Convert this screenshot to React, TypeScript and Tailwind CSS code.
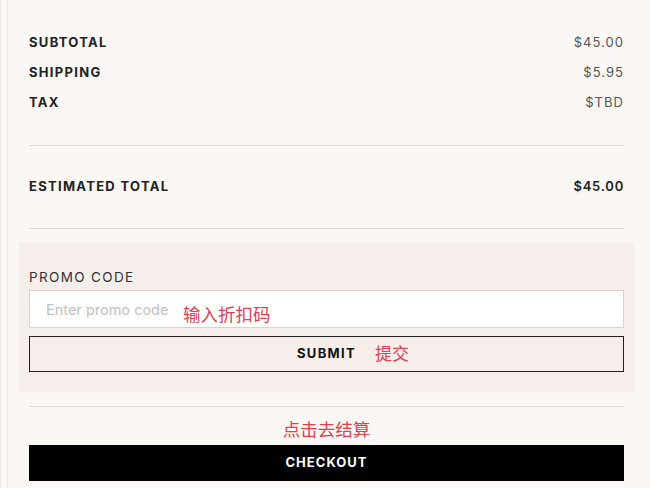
import React from 'react';

const rows = [
    { label: 'SUBTOTAL', value: '$45.00' },
    { label: 'SHIPPING', value: '$5.95' },
    { label: 'TAX', value: '$TBD' },
];

const font = { fontFamily: 'Inter, "Noto Sans CJK SC", sans-serif' };

export default function App() {
    return (
        <div className="w-[650px] h-[488px] overflow-hidden bg-[#faf7f4] flex" style={font}>
            {/* left edge strip */}
            <div className="w-[8px] shrink-0 border-l border-r border-[#ece7e3]"></div>

            <div className="flex-1 pt-[28px] pl-[21px] pr-[26px]">
                {/* Summary rows */}
                {rows.map((row) => (
                    <div key={row.label} className="h-[30px] flex items-center justify-between">
                        <span className="text-[13px] font-bold tracking-[0.1em] text-[#222]">{row.label}</span>
                        <span className="text-[13px] tracking-[0.08em] text-[#555]">{row.value}</span>
                    </div>
                ))}

                <div className="mt-[27px] border-t border-[#dcd8d4]"></div>

                <div className="mt-[26px] h-[30px] flex items-center justify-between">
                    <span className="text-[13px] font-bold tracking-[0.1em] text-[#222]">ESTIMATED TOTAL</span>
                    <span className="text-[13px] font-semibold tracking-[0.06em] text-[#222]">$45.00</span>
                </div>

                <div className="mt-[26px] border-t border-[#dcd8d4]"></div>

                {/* Promo code */}
                <div className="mt-[13px] -mx-[10px] px-[10px] pt-[27px] pb-[20px] bg-[#f5eeea]">
                    <div className="h-[16px] flex items-center text-[13.5px] tracking-[0.1em] text-[#333]">
                        PROMO CODE
                    </div>
                    <div className="relative mt-[5px]">
                        <input
                            type="text"
                            placeholder="Enter promo code"
                            className="w-full h-[38px] bg-white border border-[#d6d3d0] px-[16px] text-[14.5px] text-[#333] placeholder:text-[#c2c2c2] outline-none"
                        />
                        <span className="absolute left-[154px] top-[14px] text-[17.5px] leading-[22px] text-[#e0404f]">
                            输入折扣码
                        </span>
                    </div>
                    <button className="relative mt-[8px] w-full h-[36px] border border-[#222] flex items-center justify-center">
                        <span className="text-[13px] font-bold tracking-[0.1em] text-[#111]">SUBMIT</span>
                        <span className="absolute left-[345px] top-[6px] text-[17px] leading-[22px] text-[#e0404f]">
                            提交
                        </span>
                    </button>
                </div>

                <div className="mt-[14px] border-t border-[#dcd8d4]"></div>

                {/* Checkout */}
                <div className="mt-[12px] h-[22px] flex items-center justify-center text-[17.5px] text-[#e0404f]">
                    点击去结算
                </div>
                <button className="mt-[4px] w-full h-[36px] bg-black flex items-center justify-center">
                    <span className="text-[13px] font-bold tracking-[0.08em] text-white">CHECKOUT</span>
                </button>
            </div>
        </div>
    );
}
